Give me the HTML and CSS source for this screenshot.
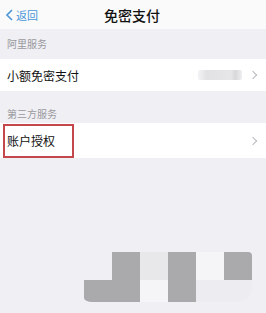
FILE: index.html
```html
<!DOCTYPE html>
<html lang="zh-CN">
<head>
    <meta charset="UTF-8">
    <meta name="viewport" content="width=device-width, initial-scale=1.0">
    <title>免密支付</title>
    <link rel="stylesheet" href="styles.css">
</head>
<body>
    <div class="page">
        <div class="nav">
            <div class="back">
                <svg class="back-icon" width="9" height="12" viewBox="0 0 9 12">
                    <path d="M7 1 L2 6 L7 11" fill="none" stroke="#4a96d8" stroke-width="1.6"/>
                </svg>
                <span>返回</span>
            </div>
            <div class="title">免密支付</div>
        </div>

        <div class="section-label">阿里服务</div>
        <div class="row">
            <span class="row-text">小额免密支付</span>
            <span class="row-right">
                <span class="blur"></span>
                <span class="chevron"></span>
            </span>
        </div>

        <div class="section-label second">第三方服务</div>
        <div class="row tall">
            <span class="row-text">账户授权</span>
            <span class="row-right">
                <span class="chevron"></span>
            </span>
            <div class="mark"></div>
        </div>

        <!-- pixelated watermark -->
        <div class="mosaic">
            <span class="m-empty"></span>
            <span class="m-dark"></span>
            <span class="m-light"></span>
            <span class="m-dark"></span>
            <span class="m-white"></span>
            <span class="m-dark m-corner"></span>
            <span class="m-dark m-wide"></span>
            <span class="m-white"></span>
            <span class="m-dark"></span>
            <span class="m-pale"></span>
            <span class="m-pale m-end"></span>
        </div>
    </div>
</body>
</html>
```

FILE: styles.css
```css
body {
    margin: 0;
    font-family: "Noto Sans CJK SC", "Noto Sans", sans-serif;
    background-color: #efeff4;
}

.page {
    position: relative;
    width: 266px;
    height: 313px;
    overflow: hidden;
}

.nav {
    position: relative;
    height: 29px;
    background: #fafafa;
    display: flex;
    align-items: center;
    justify-content: center;
}

.back {
    position: absolute;
    left: 5px;
    top: 0;
    height: 29px;
    display: flex;
    align-items: center;
    gap: 2px;
    color: #4a96d8;
    font-size: 11px;
}

.title {
    font-size: 14px;
    font-weight: 500;
    color: #111;
    margin-left: -2px;
}

.section-label {
    height: 30px;
    line-height: 30px;
    padding-left: 7px;
    font-size: 10px;
    color: #9a9a9e;
}

.section-label.second {
    height: 32px;
    line-height: 46px;
}

.row {
    position: relative;
    height: 32px;
    background: #fff;
    display: flex;
    align-items: center;
    justify-content: space-between;
    padding: 0 7px;
}

.row.tall {
    height: 35px;
}

.row-text {
    font-size: 12px;
    color: #111;
}

.row-right {
    display: flex;
    align-items: center;
    gap: 8px;
}

.blur {
    width: 44px;
    height: 10px;
    background: linear-gradient(90deg, #f3f3f5, #e2e2e5 20%, #e6e6e9 75%, #d8d8db 85%, #eeeef0);
    border-radius: 2px;
}

.chevron {
    width: 5px;
    height: 5px;
    border-top: 1px solid #b9b9be;
    border-right: 1px solid #b9b9be;
    transform: rotate(45deg);
    margin-right: 3px;
}

.mark {
    position: absolute;
    left: 3px;
    top: 1px;
    width: 67px;
    height: 30px;
    border: 2px solid #c4474b;
}

.mosaic {
    position: absolute;
    left: 84px;
    top: 252px;
    display: grid;
    grid-template-columns: repeat(6, 28px);
    grid-template-rows: 28px 22px;
}

.mosaic span {
    display: block;
}

.m-dark { background: #aaaaad; }
.m-light { background: #e8e8eb; }
.m-white { background: #f5f5f8; }
.m-pale { background: #ededf1; }

.m-wide {
    grid-column: span 2;
    border-bottom-left-radius: 8px 4px;
}

.m-corner {
    border-top-right-radius: 4px;
}

.m-end {
    border-bottom-right-radius: 14px;
}
```
